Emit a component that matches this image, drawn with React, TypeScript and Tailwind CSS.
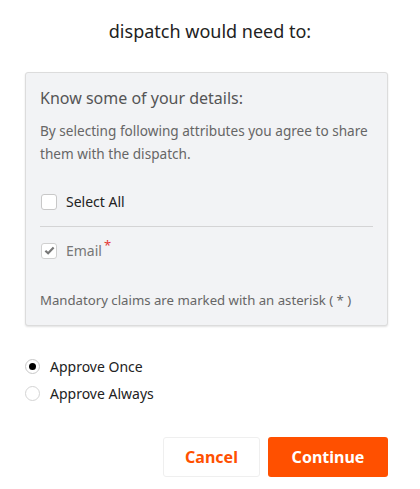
import { useState } from 'react'

export default function App() {
  const [selectAll, setSelectAll] = useState(false)
  const [approve, setApprove] = useState<'once' | 'always'>('once')

  return (
    <div className="w-[420px] h-[489px] bg-white font-['Noto_Sans',sans-serif] text-[#222]">
      <h1 className="pt-[18px] text-center text-[18px] leading-[26px] text-[#222]">
        dispatch would need to:
      </h1>

      <div className="ml-[25px] mr-[32px] mt-[28px] h-[254px] rounded-[3px] border border-[#dcdcdc] bg-[#f2f3f5] px-[14px] pt-[14px] shadow-[0_1px_2px_rgba(0,0,0,0.12)]">
        <h2 className="text-[16px] leading-[22px] text-[#555]">Know some of your details:</h2>
        <p className="mt-[10px] text-[13.6px] leading-[23px] text-[#666]">
          By selecting following attributes you agree to share them with the dispatch.
        </p>

        <label className="mt-[26px] flex items-center gap-[9px] px-px">
          <span
            onClick={() => setSelectAll(!selectAll)}
            className="h-[16px] w-[16px] rounded-[3px] border border-[#c8c8c8] bg-white"
          />
          <span className="text-[14px] text-[#222]">Select All</span>
        </label>

        <div className="mt-[14px] border-t border-[#d4d4d5]" />

        <div className="mt-[13px] flex items-center gap-[9px] px-px">
          <span className="flex h-[16px] w-[16px] items-center justify-center rounded-[3px] border border-[#d0d0d0] bg-white">
            <svg viewBox="0 0 12 12" className="h-[11px] w-[11px]">
              <path d="M1.5 6.2 L4.5 9 L10.5 2.8" fill="none" stroke="#777" strokeWidth="2.4" />
            </svg>
          </span>
          <span className="text-[14px] text-[#777]">
            Email<sup className="ml-[2px] text-[13px] text-[#e53935]">*</sup>
          </span>
        </div>

        <p className="mt-[30px] text-[13.2px] text-[#666]">
          Mandatory claims are marked with an asterisk ( * )
        </p>
      </div>

      <div className="mt-[30px] ml-[25px] flex flex-col gap-[6px]">
        <label className="flex items-center gap-[10px]" onClick={() => setApprove('once')}>
          <span className="flex h-[15px] w-[15px] items-center justify-center rounded-full border border-[#c8c8c8] bg-white">
            {approve === 'once' && <span className="h-[7px] w-[7px] rounded-full bg-black" />}
          </span>
          <span className="text-[14px] text-[#222]">Approve Once</span>
        </label>
        <label className="flex items-center gap-[10px]" onClick={() => setApprove('always')}>
          <span className="flex h-[15px] w-[15px] items-center justify-center rounded-full border border-[#d4d4d4] bg-white">
            {approve === 'always' && <span className="h-[7px] w-[7px] rounded-full bg-black" />}
          </span>
          <span className="text-[14px] text-[#222]">Approve Always</span>
        </label>
      </div>

      <div className="mt-[33px] mr-[32px] flex justify-end gap-[8px]">
        <button className="h-[40px] w-[97px] rounded-[3px] border border-[#efefef] bg-white text-[16px] font-bold text-[#ff5000]">
          Cancel
        </button>
        <button className="h-[40px] w-[120px] rounded-[3px] bg-[#ff5000] text-[16px] font-bold text-white">
          Continue
        </button>
      </div>
    </div>
  )
}
